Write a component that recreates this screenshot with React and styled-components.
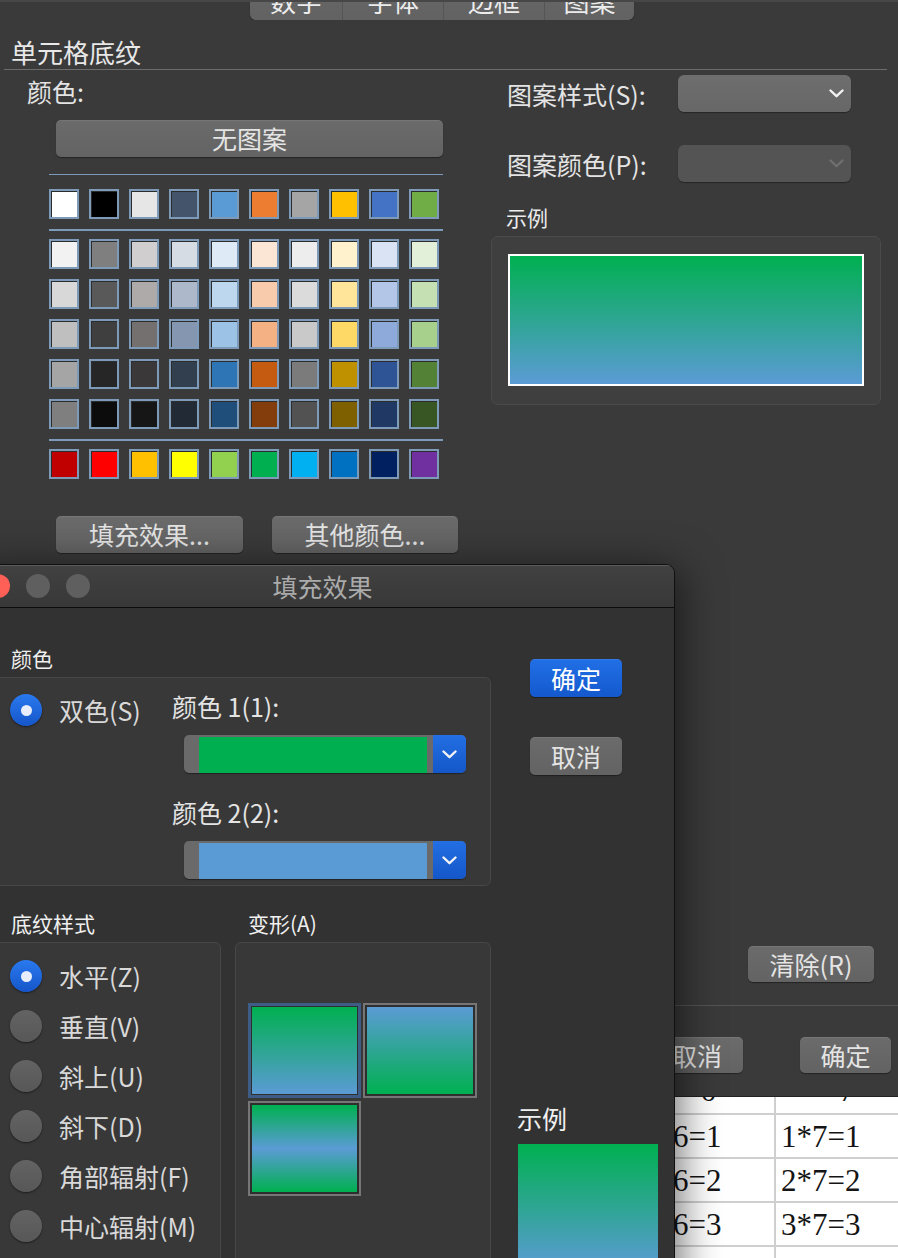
import React from "react";
import styled, { createGlobalStyle } from "styled-components";

const GREEN = "#00b050";
const BLUE = "#5b9bd5";

const THEME = ["#ffffff", "#000000", "#e7e6e6", "#44546a", "#5b9bd5", "#ed7d31", "#a5a5a5", "#ffc000", "#4472c4", "#70ad47"];
const SHADES = [
  ["#f2f2f2", "#7f7f7f", "#d0cece", "#d6dce4", "#deebf6", "#fbe5d5", "#ededed", "#fff2cc", "#dae3f3", "#e2efd9"],
  ["#d8d8d8", "#595959", "#aeaaaa", "#adb9ca", "#bdd7ee", "#f7cbac", "#dbdbdb", "#fee599", "#b4c6e7", "#c5e0b3"],
  ["#bfbfbf", "#3f3f3f", "#757070", "#8496b0", "#9cc3e5", "#f4b183", "#c9c9c9", "#ffd965", "#8eaadb", "#a8d08d"],
  ["#a5a5a5", "#262626", "#3a3838", "#323f4f", "#2e75b5", "#c55a11", "#7b7b7b", "#bf9000", "#2f5496", "#538135"],
  ["#7f7f7f", "#0c0c0c", "#171616", "#222a35", "#1e4e79", "#833c0b", "#525252", "#7f6000", "#1f3864", "#375623"],
];
const STANDARD = ["#c00000", "#ff0000", "#ffc000", "#ffff00", "#92d050", "#00b050", "#00b0f0", "#0070c0", "#002060", "#7030a0"];

const TABS = [
  { label: "数字", w: 92 },
  { label: "字体", w: 101 },
  { label: "边框", w: 101 },
  { label: "图案", w: 90 },
];

const STYLES = ["水平(Z)", "垂直(V)", "斜上(U)", "斜下(D)", "角部辐射(F)", "中心辐射(M)"];

const VARIANTS = [
  { bg: `linear-gradient(${GREEN}, ${BLUE})`, selected: true },
  { bg: `linear-gradient(${BLUE}, ${GREEN})` },
  { bg: `linear-gradient(${GREEN}, ${BLUE} 50%, ${GREEN})` },
];

const ROWS = [
  ["1*6=1", "1*7=1"],
  ["2*6=2", "2*7=2"],
  ["3*6=3", "3*7=3"],
  ["", ""],
];

const Chevron = ({ color = "#f2f2f2" }) => (
  <svg width="15" height="9" viewBox="0 0 15 9">
    <path d="M1.5 1.5 L7.5 7.2 L13.5 1.5" fill="none" stroke={color} strokeWidth="2.4" strokeLinecap="round" strokeLinejoin="round" />
  </svg>
);

export default function App() {
  return (
    <Page>
      <GlobalStyle />
      <DialogPane>
        <TabBar>
          <Segments>
            {TABS.map((t, i) => (
              <Tab key={t.label} $w={t.w} $first={i === 0}>{t.label}</Tab>
            ))}
          </Segments>
        </TabBar>
        <Heading>单元格底纹</Heading>
        <Rule />
        <Columns>
          <PaletteCol>
            <Label>颜色:</Label>
            <Button $w={387} $ml={29} $mt={13}>无图案</Button>
            <Palette>
              <PaletteLine $mt={17} $h={1} />
              <SwatchRow $mt={14}>
                {THEME.map((c, i) => <Swatch key={i} $c={c} />)}
              </SwatchRow>
              <PaletteLine $mt={10} $h={2} />
              <SwatchGrid>
                {SHADES.flat().map((c, i) => <Swatch key={i} $c={c} />)}
              </SwatchGrid>
              <PaletteLine $mt={10} $h={2} />
              <SwatchRow $mt={8}>
                {STANDARD.map((c, i) => <Swatch key={i} $c={c} />)}
              </SwatchRow>
            </Palette>
            <ButtonRow>
              <Button $w={187}>填充效果...</Button>
              <Button $w={186}>其他颜色...</Button>
            </ButtonRow>
          </PaletteCol>
          <PatternCol>
            <FieldRow>
              <FieldName>图案样式(S):</FieldName>
              <Select>
                <Chevron />
              </Select>
            </FieldRow>
            <FieldRow $mt={33}>
              <FieldName>图案颜色(P):</FieldName>
              <Select $disabled>
                <Chevron color="#6f6f6f" />
              </Select>
            </FieldRow>
            <SmallLabel>示例</SmallLabel>
            <SamplePanel>
              <SampleFill />
            </SamplePanel>
          </PatternCol>
        </Columns>
        <ClearRow>
          <Button $w={126} $h={36}>清除(R)</Button>
        </ClearRow>
        <Footer>
          <Button $w={92} $h={36}>取消</Button>
          <Button $w={91} $h={36}>确定</Button>
        </Footer>
      </DialogPane>

      <Sheet>
        <Cell $h={18} $center><HeadText>6</HeadText></Cell>
        <Cell $h={18} $center><HeadText>7</HeadText></Cell>
        {ROWS.flat().map((t, i) => (
          <Cell key={i} $h={44}>{t}</Cell>
        ))}
      </Sheet>

      <FillWindow>
        <TitleBar>
          <Lights>
            <Light $c="#fe5f57" />
            <Light $c="#5f5f5f" />
            <Light $c="#5f5f5f" />
          </Lights>
          <Title>填充效果</Title>
          <span />
        </TitleBar>
        <Body>
          <TopRow>
            <ColorCol>
              <GroupTitle $pl={21}>颜色</GroupTitle>
              <ColorGroup>
                <RadioRow $w={162} $mt={4}>
                  <Radio $on />
                  <RadioText>双色(S)</RadioText>
                </RadioRow>
                <ColorFields>
                  <FieldLabel>颜色 1(1):</FieldLabel>
                  <ColorSelect>
                    <Well $c={GREEN} />
                    <DropButton><Chevron /></DropButton>
                  </ColorSelect>
                  <FieldLabel $mt={23}>颜色 2(2):</FieldLabel>
                  <ColorSelect>
                    <Well $c={BLUE} />
                    <DropButton><Chevron /></DropButton>
                  </ColorSelect>
                </ColorFields>
              </ColorGroup>
            </ColorCol>
            <ActionCol>
              <Button $w={92} $h={38} $primary>确定</Button>
              <Button $w={92} $h={38}>取消</Button>
            </ActionCol>
          </TopRow>
          <BottomRow>
            <StyleCol>
              <GroupTitle $pl={21}>底纹样式</GroupTitle>
              <StyleGroup>
                {STYLES.map((s, i) => (
                  <RadioRow key={s}>
                    <Radio $on={i === 0} />
                    <RadioText>{s}</RadioText>
                  </RadioRow>
                ))}
              </StyleGroup>
            </StyleCol>
            <VariantCol>
              <GroupTitle $pl={13}>变形(A)</GroupTitle>
              <VariantGroup>
                <Tiles>
                  {VARIANTS.map((v, i) => (
                    <Tile key={i} $selected={v.selected}>
                      <TileFill style={{ background: v.bg }} />
                    </Tile>
                  ))}
                </Tiles>
              </VariantGroup>
            </VariantCol>
            <PreviewCol>
              <PreviewLabel>示例</PreviewLabel>
              <PreviewBox />
            </PreviewCol>
          </BottomRow>
        </Body>
      </FillWindow>
    </Page>
  );
}

const GlobalStyle = createGlobalStyle`
  html, body { margin: 0; padding: 0; }
  body {
    background: #3a3a3a;
    font-family: "Noto Sans CJK SC", "Noto Sans", sans-serif;
    color: #e4e4e4;
  }
  * { box-sizing: border-box; }
`;

const Page = styled.div`
  position: relative;
  width: 898px;
  height: 1258px;
  overflow: hidden;
  background: #3a3a3a;
  border-top: 2px solid #474747;
`;

const DialogPane = styled.div`
  height: 1095px;
  display: flex;
  flex-direction: column;
`;

const TabBar = styled.div`
  height: 18px;
  padding-left: 250px;
  display: flex;
  align-items: flex-end;
  overflow: hidden;
  flex: none;
`;

const Segments = styled.div`
  display: flex;
  flex: none;
  height: 38px;
  background: linear-gradient(#676767, #626262);
  border-radius: 0 0 6px 6px;
  box-shadow: 0 1px 1px rgba(0, 0, 0, 0.4);
`;

const Tab = styled.div`
  width: ${(p) => p.$w}px;
  display: flex;
  align-items: center;
  justify-content: center;
  font-size: 26px;
  line-height: 32px;
  color: #ececec;
  border-left: ${(p) => (p.$first ? "none" : "1px solid #555")};
`;

const Heading = styled.div`
  margin-top: 16px;
  padding-left: 11px;
  font-size: 26px;
  line-height: 32px;
  color: #e8e8e8;
`;

const Rule = styled.div`
  height: 1px;
  margin: 1px 11px 0 4px;
  background: #6c6c6c;
  flex: none;
`;

const Columns = styled.div`
  display: flex;
  margin-top: 5px;
`;

const PaletteCol = styled.div`
  width: 491px;
  padding-left: 27px;
  display: flex;
  flex-direction: column;
  align-items: flex-start;
`;

const Label = styled.div`
  font-size: 25px;
  line-height: 32px;
  color: #e4e4e4;
`;

const Button = styled.button`
  flex: none;
  width: ${(p) => p.$w}px;
  height: ${(p) => p.$h || 37}px;
  margin: ${(p) => p.$mt || 0}px 0 0 ${(p) => p.$ml || 0}px;
  padding: 0;
  border: none;
  border-radius: 5px;
  font-family: inherit;
  font-size: 25px;
  line-height: 1;
  color: ${(p) => (p.$primary ? "#ffffff" : "#e4e4e4")};
  background: ${(p) =>
    p.$primary ? "linear-gradient(#216fe6, #1459cd)" : "linear-gradient(#6b6b6b, #636363)"};
  box-shadow: 0 1px 1px rgba(0, 0, 0, 0.4), inset 0 1px 0 rgba(255, 255, 255, 0.08);
`;

const Palette = styled.div`
  margin-left: 22px;
  width: 394px;
`;

const PaletteLine = styled.div`
  margin-top: ${(p) => p.$mt}px;
  height: ${(p) => p.$h}px;
  background: #7d9bb8;
`;

const SwatchRow = styled.div`
  margin-top: ${(p) => p.$mt}px;
  display: grid;
  grid-template-columns: repeat(10, 30px);
  column-gap: 10px;
`;

const SwatchGrid = styled(SwatchRow)`
  margin-top: 8px;
  row-gap: 10px;
`;

const Swatch = styled.div`
  width: 30px;
  height: 30px;
  background: ${(p) => p.$c};
  border: 2px solid #7d9bb8;
  box-shadow: inset 1px 1px 0 #2c2c2c;
`;

const ButtonRow = styled.div`
  display: flex;
  gap: 29px;
  margin: 37px 0 0 29px;
`;

const PatternCol = styled.div`
  width: 390px;
  display: flex;
  flex-direction: column;
`;

const FieldRow = styled.div`
  display: flex;
  align-items: center;
  height: 37px;
  padding-left: 16px;
  margin-top: ${(p) => p.$mt || 0}px;
`;

const FieldName = styled.div`
  width: 171px;
  font-size: 25px;
  color: #e4e4e4;
`;

const Select = styled.div`
  width: 173px;
  height: 37px;
  border-radius: 6px;
  display: flex;
  align-items: center;
  justify-content: flex-end;
  padding-right: 7px;
  background: ${(p) => (p.$disabled ? "#545454" : "linear-gradient(#6e6e6e, #676767)")};
  box-shadow: 0 1px 1px rgba(0, 0, 0, 0.35);
`;

const SmallLabel = styled.div`
  margin-top: 21px;
  padding-left: 15px;
  font-size: 21px;
  line-height: 28px;
  color: #ececec;
`;

const SamplePanel = styled.div`
  margin-top: 5px;
  height: 169px;
  padding: 17px 16px 0;
  border: 1px solid #4b4b4b;
  border-radius: 7px;
  background: #3f3f3f;
`;

const SampleFill = styled.div`
  height: 132px;
  border: 2px solid #ffffff;
  background: linear-gradient(${GREEN}, ${BLUE});
`;

const ClearRow = styled.div`
  margin-top: auto;
  display: flex;
  justify-content: flex-end;
  padding-right: 24px;
`;

const Footer = styled.div`
  margin-top: 23px;
  height: 92px;
  flex: none;
  display: flex;
  justify-content: flex-end;
  align-items: flex-start;
  gap: 57px;
  padding: 31px 7px 0 0;
  border-top: 1px solid #545454;
  border-bottom: 1px solid #222;
`;

const Sheet = styled.div`
  display: grid;
  grid-template-columns: 139px 139px;
  padding-left: 637px;
  background: #ffffff;
  font-family: "Liberation Serif", "Times New Roman", serif;
  color: #141414;
`;

const Cell = styled.div`
  height: ${(p) => p.$h}px;
  padding: 2px 0 0 5px;
  overflow: hidden;
  border-right: 2px solid #cfcfcf;
  border-bottom: 2px solid #cfcfcf;
  font-size: 31px;
  line-height: 40px;
  text-align: ${(p) => (p.$center ? "center" : "left")};
  white-space: nowrap;
`;

const HeadText = styled.span`
  display: block;
  margin-top: -28px;
`;

const FillWindow = styled.section`
  position: absolute;
  left: -30px;
  top: 562px;
  width: 705px;
  height: 760px;
  background: #323232;
  border: 1px solid #101010;
  border-radius: 9px 9px 0 0;
  box-shadow: 0 10px 40px 6px rgba(0, 0, 0, 0.55);
  overflow: hidden;
`;

const TitleBar = styled.div`
  height: 43px;
  display: grid;
  grid-template-columns: 1fr auto 1fr;
  align-items: center;
  padding-left: 15px;
  background: linear-gradient(#414141, #383838);
  border-bottom: 1px solid #0c0c0c;
  box-shadow: inset 0 1px 0 #5c5c5c;
`;

const Lights = styled.div`
  display: flex;
  gap: 16px;
`;

const Light = styled.span`
  width: 24px;
  height: 24px;
  border-radius: 50%;
  background: ${(p) => p.$c};
`;

const Title = styled.div`
  font-size: 25px;
  color: #ababab;
  padding-right: 15px;
`;

const Body = styled.div`
  padding: 36px 0 0 19px;
`;

const TopRow = styled.div`
  display: flex;
  align-items: flex-start;
`;

const ColorCol = styled.div`
  width: 501px;
`;

const GroupTitle = styled.div`
  padding-left: ${(p) => p.$pl}px;
  font-size: 21px;
  line-height: 28px;
  color: #f0f0f0;
`;

const Group = styled.div`
  margin-top: 5px;
  border: 1px solid #474747;
  border-radius: 6px;
  background: #383838;
`;

const ColorGroup = styled(Group)`
  display: flex;
  align-items: flex-start;
  padding: 12px 0 6px 19px;
`;

const RadioRow = styled.div`
  flex: none;
  display: flex;
  align-items: center;
  gap: 17px;
  height: 32px;
  width: ${(p) => (p.$w ? `${p.$w}px` : "auto")};
  margin-top: ${(p) => p.$mt || 0}px;
`;

const Radio = styled.span`
  flex: none;
  width: 32px;
  height: 32px;
  border-radius: 50%;
  display: flex;
  align-items: center;
  justify-content: center;
  background: ${(p) => (p.$on ? "linear-gradient(#2a79ef, #1556c9)" : "linear-gradient(#636363, #575757)")};
  box-shadow: 0 1px 2px rgba(0, 0, 0, 0.5);
  &::after {
    content: "";
    display: ${(p) => (p.$on ? "block" : "none")};
    width: 11px;
    height: 11px;
    border-radius: 50%;
    background: #e8eefc;
  }
`;

const RadioText = styled.span`
  font-size: 25px;
  line-height: 32px;
  color: #d9d9d9;
  white-space: nowrap;
`;

const ColorFields = styled.div`
  display: flex;
  flex-direction: column;
  align-items: flex-start;
`;

const FieldLabel = styled.div`
  margin-top: ${(p) => p.$mt || 0}px;
  font-size: 25px;
  line-height: 32px;
  color: #e4e4e4;
`;

const ColorSelect = styled.div`
  margin: 13px 0 0 12px;
  width: 282px;
  height: 38px;
  display: flex;
  border-radius: 5px;
  overflow: hidden;
  background: #6a6a6a;
  padding-left: 15px;
  box-shadow: 0 1px 1px rgba(0, 0, 0, 0.4);
`;

const Well = styled.div`
  flex: 1;
  margin: 2px 6px 0 0;
  background: ${(p) => p.$c};
`;

const DropButton = styled.div`
  width: 33px;
  display: flex;
  align-items: center;
  justify-content: center;
  background: linear-gradient(#236fe3, #1457c9);
`;

const ActionCol = styled.div`
  margin-left: 39px;
  padding-top: 15px;
  display: flex;
  flex-direction: column;
  gap: 40px;
`;

const BottomRow = styled.div`
  display: flex;
  align-items: flex-start;
  margin-top: 23px;
`;

const StyleCol = styled.div`
  width: 231px;
  flex: none;
`;

const StyleGroup = styled(Group)`
  height: 400px;
  padding: 17px 0 0 19px;
  display: flex;
  flex-direction: column;
  gap: 18px;
`;

const VariantCol = styled.div`
  width: 256px;
  flex: none;
  margin-left: 14px;
`;

const VariantGroup = styled(Group)`
  height: 400px;
  padding: 60px 0 0 12px;
`;

const Tiles = styled.div`
  display: grid;
  grid-template-columns: 113px 114px;
  grid-auto-rows: 95px;
  column-gap: 2px;
  row-gap: 3px;
`;

const Tile = styled.div`
  border: ${(p) => (p.$selected ? "3px solid #3d5d86" : "2px solid #767676")};
  padding: ${(p) => (p.$selected ? "1px" : "2px")};
  background: #2e2e2e;
  display: flex;
`;

const TileFill = styled.div`
  flex: 1;
`;

const PreviewCol = styled.div`
  margin-left: 26px;
  padding-top: 194px;
`;

const PreviewLabel = styled.div`
  font-size: 25px;
  line-height: 30px;
  color: #f0f0f0;
`;

const PreviewBox = styled.div`
  margin: 11px 0 0 1px;
  width: 140px;
  height: 160px;
  background: linear-gradient(${GREEN}, ${BLUE} 125px);
`;
